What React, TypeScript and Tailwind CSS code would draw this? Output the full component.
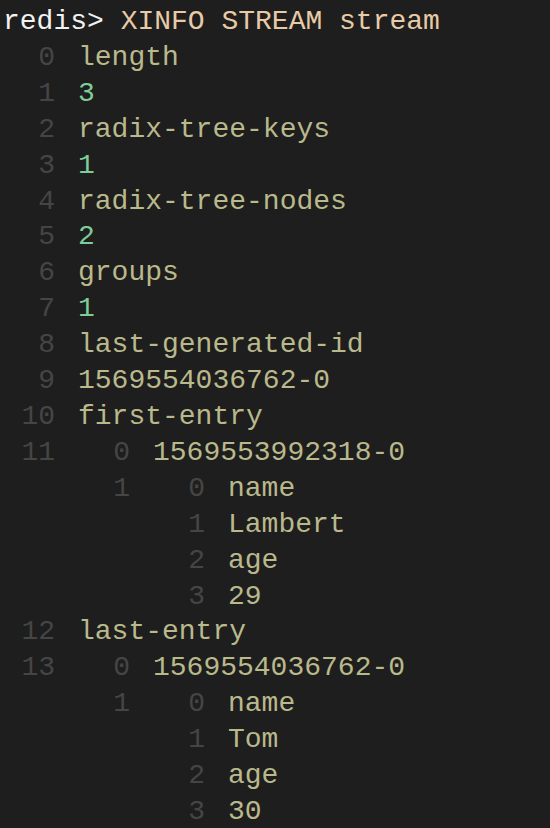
import React from "react";

type Node = { t: "s"; v: string } | { t: "n"; v: string } | { t: "a"; items: Node[] };

const s = (v: string): Node => ({ t: "s", v });
const n = (v: string): Node => ({ t: "n", v });
const a = (...items: Node[]): Node => ({ t: "a", items });

const data: Node[] = [
  s("length"),
  n("3"),
  s("radix-tree-keys"),
  n("1"),
  s("radix-tree-nodes"),
  n("2"),
  s("groups"),
  n("1"),
  s("last-generated-id"),
  s("1569554036762-0"),
  s("first-entry"),
  a(s("1569553992318-0"), a(s("name"), s("Lambert"), s("age"), s("29"))),
  s("last-entry"),
  a(s("1569554036762-0"), a(s("name"), s("Tom"), s("age"), s("30"))),
];

function List({ items }: { items: Node[] }) {
  return (
    <div className="flex flex-col">
      {items.map((it, i) => (
        <div key={i} className="flex">
          <div className="w-[52px] mr-[23px] shrink-0 text-right text-[#454545]">{i}</div>
          <div className="flex-1">
            {it.t === "a" ? (
              <List items={it.items} />
            ) : (
              <div className={it.t === "n" ? "text-[#7fcc98]" : "text-[#b9b98c]"}>{it.v}</div>
            )}
          </div>
        </div>
      ))}
    </div>
  );
}

export default function App() {
  return (
    <div
      className="w-[550px] h-[828px] overflow-hidden bg-[#1e1e1e] pt-[4px] pl-[3px] text-[28px] leading-[35.9px] whitespace-pre"
      style={{ fontFamily: '"Liberation Mono", "Courier New", monospace' }}
    >
      <div>
        <span className="text-[#f2f2f2]">redis&gt; </span>
        <span className="text-[#e8cba6]">XINFO STREAM stream</span>
      </div>
      <List items={data} />
    </div>
  );
}
